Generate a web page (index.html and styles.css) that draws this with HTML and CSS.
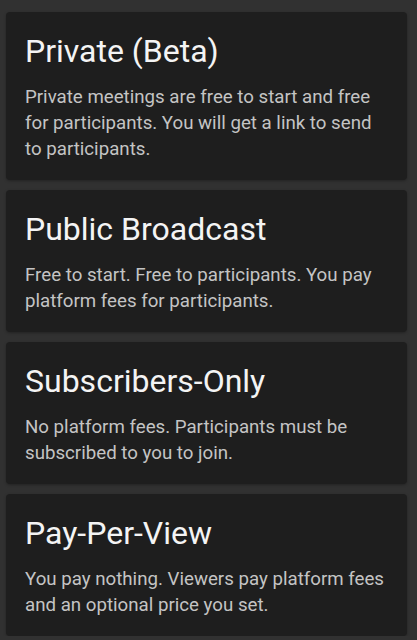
FILE: index.html
```html
<!DOCTYPE html>
<html lang="en">
<head>
  <meta charset="UTF-8">
  <meta name="viewport" content="width=device-width, initial-scale=1.0">
  <title>Meeting type</title>
  <link rel="stylesheet" href="styles.css">
</head>
<body>

<div class="options">
  <div class="option">
    <h2>Private (Beta)</h2>
    <p>Private meetings are free to start and free for participants. You will get a link to send to participants.</p>
  </div>

  <div class="option">
    <h2>Public Broadcast</h2>
    <p>Free to start. Free to participants. You pay platform fees for participants.</p>
  </div>

  <div class="option">
    <h2>Subscribers-Only</h2>
    <p>No platform fees. Participants must be subscribed to you to join.</p>
  </div>

  <div class="option">
    <h2>Pay-Per-View</h2>
    <p>You pay nothing. Viewers pay platform fees and an optional price you set.</p>
  </div>
</div>

</body>
</html>
```

FILE: styles.css
```css
body {
  font-family: Roboto, "Noto Sans", sans-serif;
  background-color: #313131;
  margin: 0;
  padding: 0;
}

.options {
  display: flex;
  flex-direction: column;
  gap: 10px;
  padding: 12px 10px 0 6px;
}

.option {
  background-color: #1e1e1e;
  border-radius: 4px;
  padding: 20px 19px 18px;
  box-shadow: 0 1px 3px rgba(0, 0, 0, 0.3);
}

.option h2 {
  margin: 0 0 14px;
  font-size: 32px;
  font-weight: 400;
  color: #f4f4f4;
}

.option p {
  margin: 0;
  font-size: 18.7px;
  line-height: 26px;
  color: #c4c4c4;
}
```
